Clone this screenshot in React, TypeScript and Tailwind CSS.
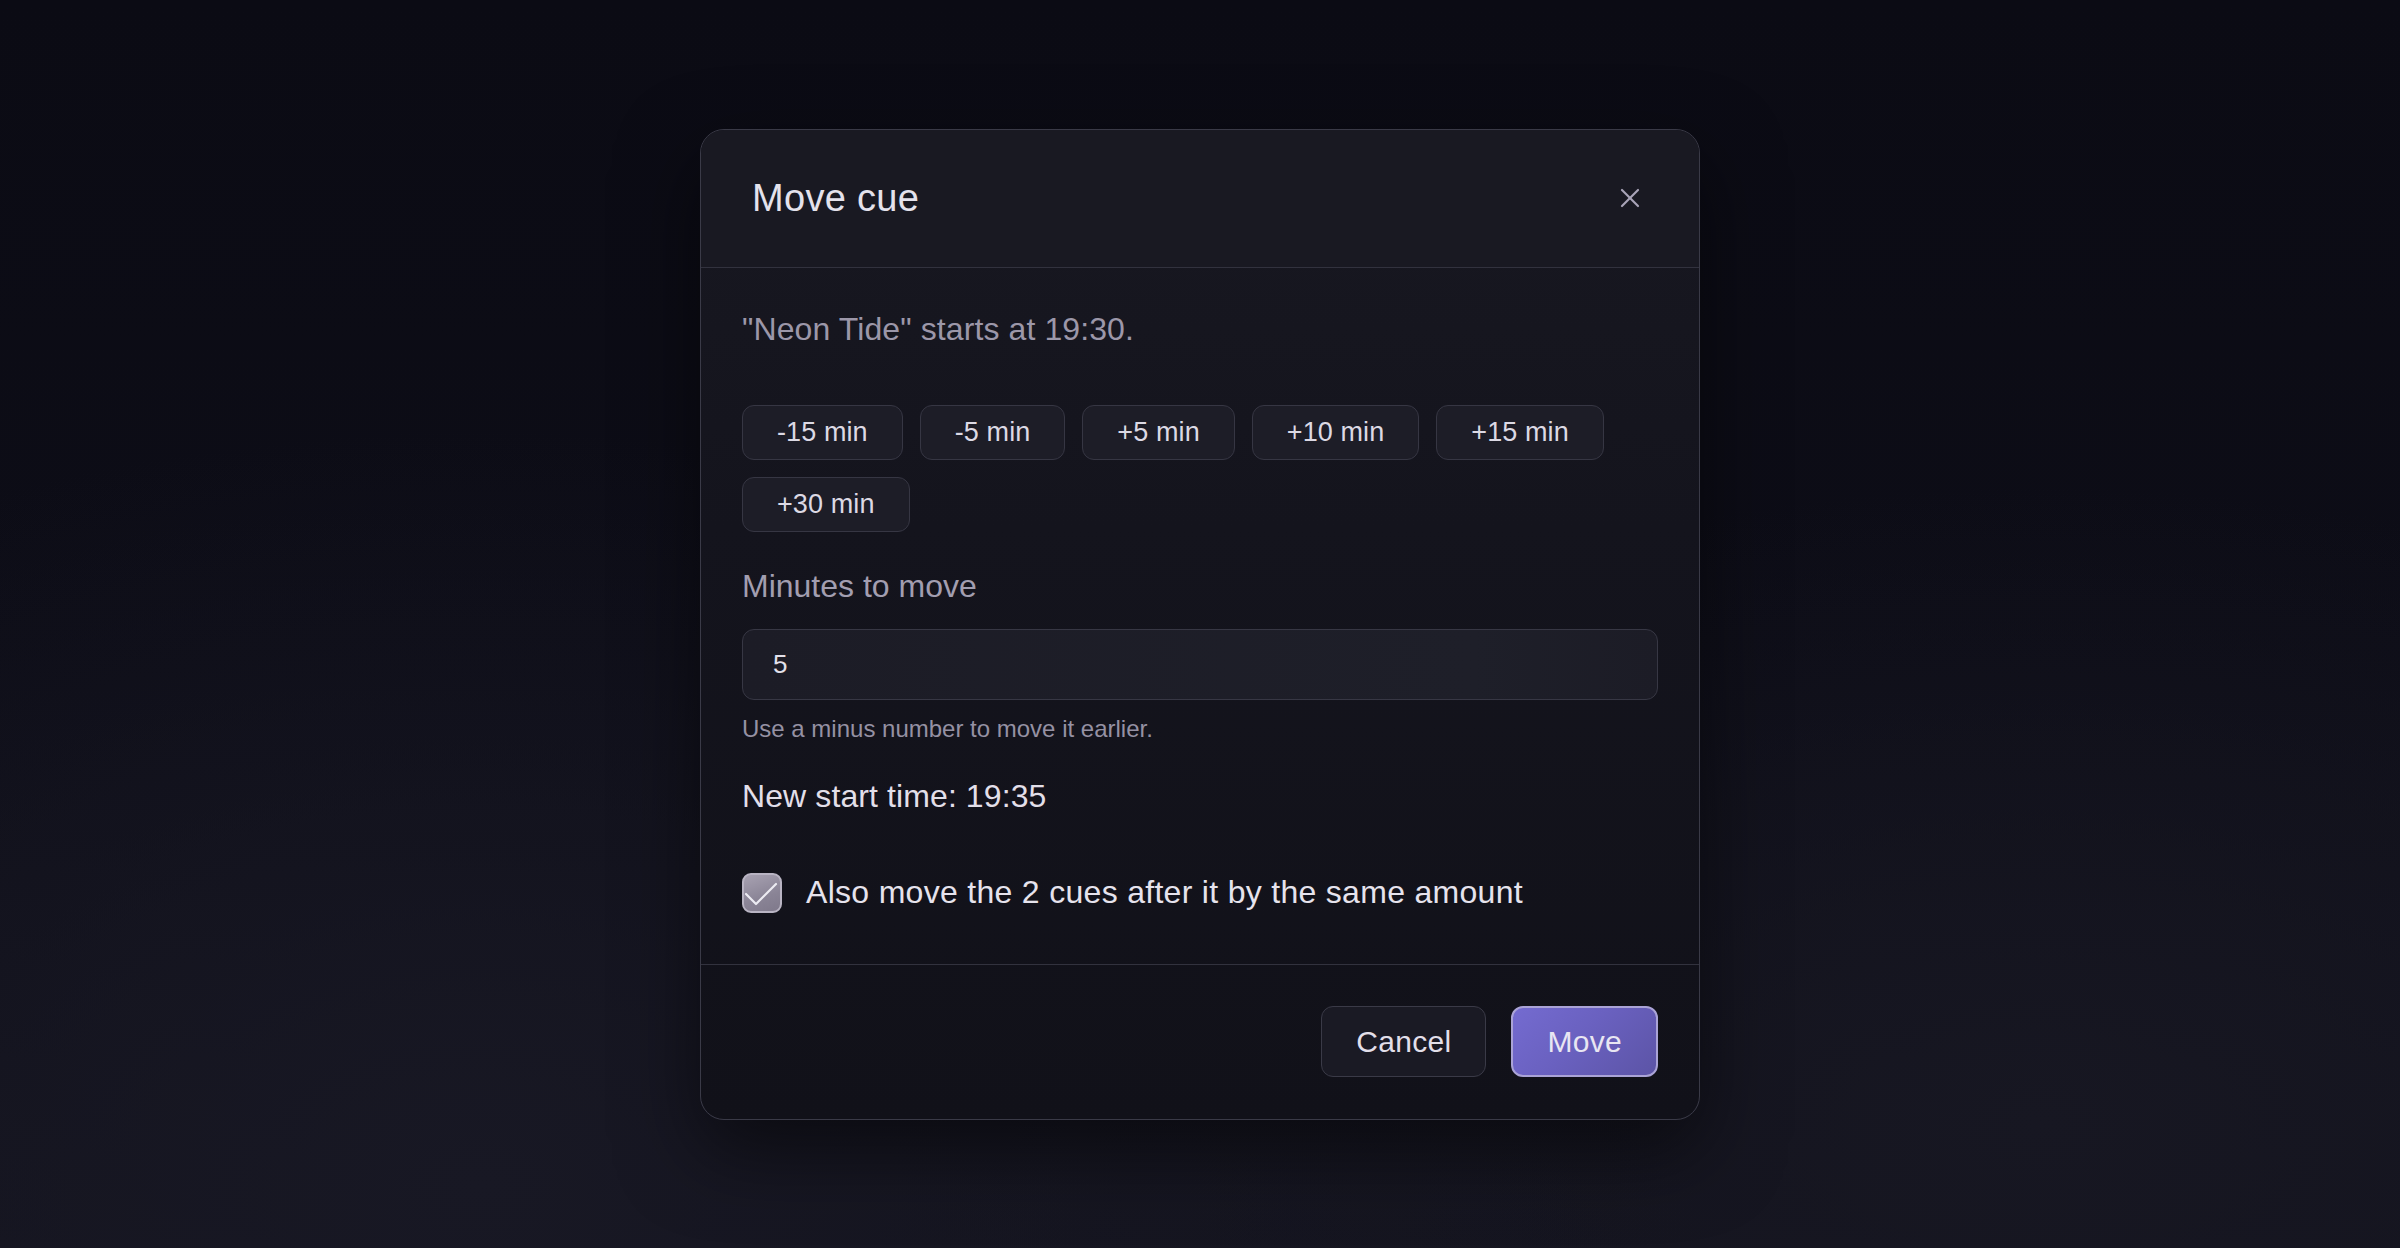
import React from "react";

const chips = ["-15 min", "-5 min", "+5 min", "+10 min", "+15 min", "+30 min"];

export default function App() {
  return (
    <div
      className="w-full h-[1248px] flex items-center justify-center bg-[radial-gradient(ellipse_at_20%_95%,#181824_0%,transparent_45%),radial-gradient(ellipse_at_85%_90%,#171722_0%,transparent_40%),linear-gradient(180deg,#0b0b14_0%,#0d0d17_55%,#13131d_100%)]"
      style={{ fontFamily: '"Liberation Sans", Arial, sans-serif' }}
    >
      <div className="w-[1000px] rounded-[24px] border border-[#3a3a47] bg-[linear-gradient(180deg,#181821_0%,#14141d_40%,#111119_100%)] shadow-[0_30px_80px_rgba(0,0,0,0.5)] overflow-hidden">
        {/* Header */}
        <div className="h-[138px] flex items-center justify-between pl-[51px] pr-[49px] border-b border-[#32323e] bg-[#191922]">
          <h2 className="text-[38px] leading-[48px] tracking-[0.3px] text-[#e4e2ec] font-normal">Move cue</h2>
          <button className="w-[40px] h-[40px] flex items-center justify-center text-[#a9a4b8]">
            <svg width="20" height="20" viewBox="0 0 20 20" fill="none" stroke="currentColor" strokeWidth="2.2" strokeLinecap="round">
              <line x1="2" y1="2" x2="18" y2="18" />
              <line x1="18" y1="2" x2="2" y2="18" />
            </svg>
          </button>
        </div>

        {/* Body */}
        <div className="px-[41px] pt-[37px] pb-[48px] flex flex-col">
          <p className="text-[32px] leading-[48px] tracking-[0.1px] text-[#9c97a9]">"Neon Tide" starts at 19:30.</p>

          <div className="mt-[52px] flex flex-wrap gap-x-[17px] gap-y-[17px]">
            {chips.map((c) => (
              <button
                key={c}
                className="h-[55px] px-[34px] rounded-[12px] border border-[#363643] bg-[#1d1d27] text-[27px] leading-none tracking-[0.1px] text-[#dcd9e4]"
              >
                {c}
              </button>
            ))}
          </div>

          <label className="mt-[30px] text-[32px] leading-[48px] text-[#a29eb0]">Minutes to move</label>

          <div className="mt-[19px] h-[71px] rounded-[12px] border border-[#373744] bg-[linear-gradient(90deg,#1c1c26_0%,#1e1f29_80%,#1c1c26_100%)] flex items-center pl-[30px]">
            <span className="text-[26px] text-[#e2e0ea]">5</span>
          </div>

          <p className="mt-[11px] text-[24px] leading-[36px] text-[#9591a3]">Use a minus number to move it earlier.</p>

          <p className="mt-[25px] text-[32px] leading-[48px] tracking-[0.1px] text-[#e2dfe9]">New start time: 19:35</p>

          <div className="mt-[48px] h-[48px] flex items-center gap-[24px]">
            <div className="w-[40px] h-[40px] rounded-[9px] border-2 border-[#b9b4c3] bg-[linear-gradient(160deg,#a8a2b2_0%,#8a8496_60%,#7f798b_100%)] flex items-center justify-center shrink-0 mt-[3px]">
              <svg width="36" height="36" viewBox="0 0 36 36" fill="none" stroke="#ecebf2" strokeWidth="2.2" strokeLinecap="round" strokeLinejoin="round">
                <polyline points="2,19 12,29 32,9" />
              </svg>
            </div>
            <span className="text-[32px] leading-[48px] tracking-[0.3px] text-[#e6e3ed]">Also move the 2 cues after it by the same amount</span>
          </div>
        </div>

        {/* Footer */}
        <div className="border-t border-[#32323e] pt-[41px] pb-[42px] pr-[41px] flex justify-end gap-[25px]">
          <button className="h-[71px] px-[34px] rounded-[12px] border border-[#3a3a47] bg-[#1a1a24] text-[30px] tracking-[0.3px] text-[#e2dfe9]">
            Cancel
          </button>
          <button className="h-[71px] px-[34px] rounded-[12px] border-2 border-[#aaa3d6] bg-[linear-gradient(135deg,#746bd0_0%,#6a61c0_45%,#5c54a6_100%)] text-[30px] tracking-[0.3px] text-[#e8e6f2]">
            Move
          </button>
        </div>
      </div>
    </div>
  );
}
